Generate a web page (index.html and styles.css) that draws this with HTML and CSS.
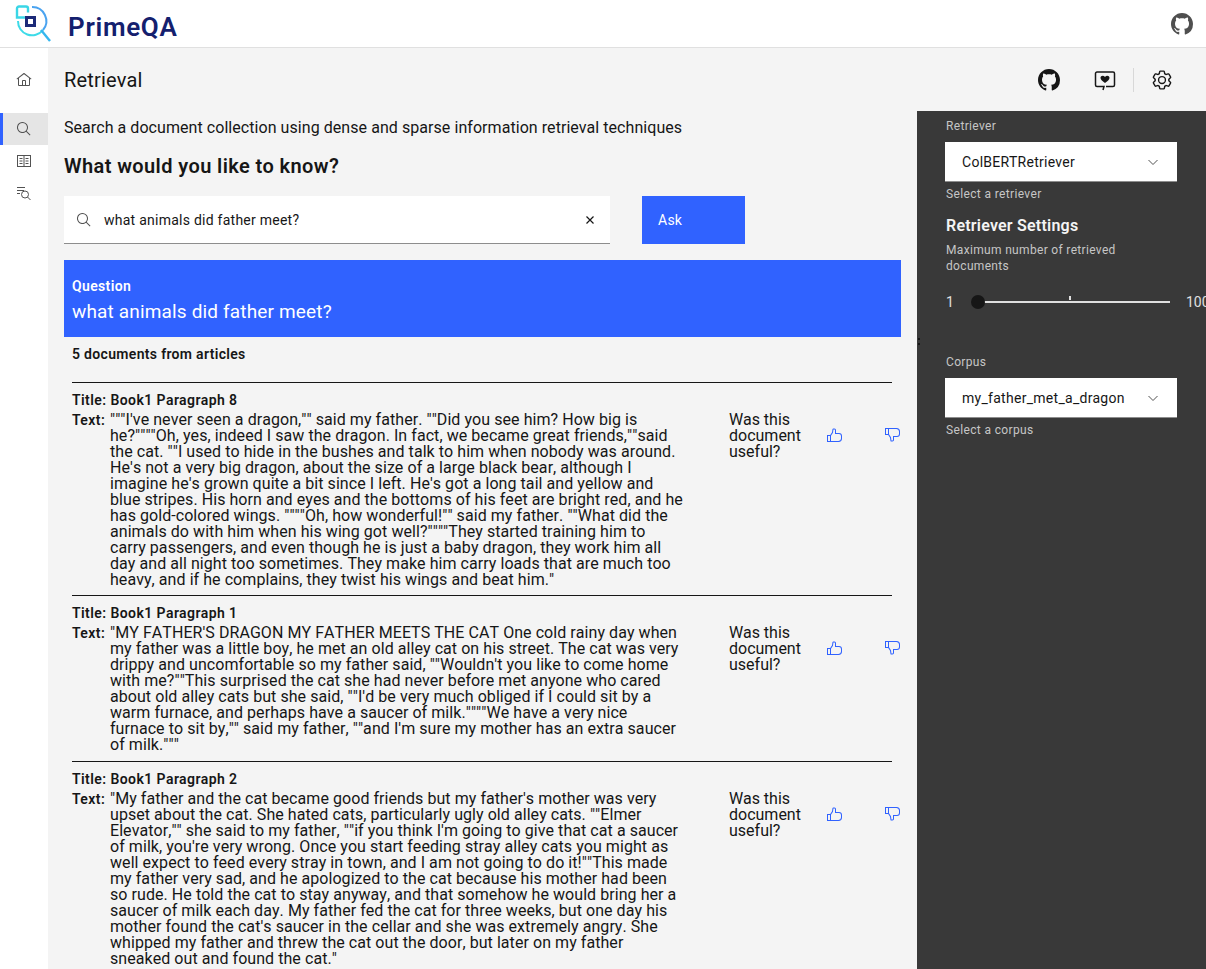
FILE: index.html
```html
<!DOCTYPE html>
<html lang="en">
<head>
  <meta charset="UTF-8">
  <meta name="viewport" content="width=device-width, initial-scale=1.0">
  <title>PrimeQA - Retrieval</title>
  <link rel="stylesheet" href="styles.css">
</head>
<body>
  <header class="topbar">
    <svg class="logo" width="40" height="44" viewBox="0 0 40 44" fill="none">
      <path d="M19 5a14 14 0 0 1 11 23" stroke="#4aa3f0" stroke-width="2"/>
      <path d="M5 19a14 14 0 0 0 25 9" stroke="#3ddbe8" stroke-width="2"/>
      <path d="M12 15.5H4V6.5a2 2 0 0 1 2-2h7a2 2 0 0 1 2 2v4" stroke="#3ad6e6" stroke-width="2.4"/>
      <rect x="13.5" y="15.5" width="8" height="8" stroke="#1c2a78" stroke-width="3"/>
      <path d="M28 28l9 11" stroke="#35b6ee" stroke-width="2.4"/>
    </svg>
    <span class="brand">PrimeQA</span>
    <svg class="top-github" width="22" height="22" viewBox="0 0 16 16" fill="#4f4f4f"><path d="M8 0C3.58 0 0 3.58 0 8c0 3.54 2.29 6.53 5.47 7.59.4.07.55-.17.55-.38 0-.19-.01-.82-.01-1.49-2.01.37-2.53-.49-2.69-.94-.09-.23-.48-.94-.82-1.13-.28-.15-.68-.52-.01-.53.63-.01 1.08.58 1.23.82.72 1.21 1.87.87 2.33.66.07-.52.28-.87.51-1.07-1.78-.2-3.64-.89-3.64-3.95 0-.87.31-1.59.82-2.15-.08-.2-.36-1.02.08-2.12 0 0 .67-.21 2.2.82.64-.18 1.32-.27 2-.27s1.36.09 2 .27c1.53-1.04 2.2-.82 2.2-.82.44 1.1.16 1.92.08 2.12.51.56.82 1.27.82 2.15 0 3.07-1.87 3.75-3.65 3.95.29.25.54.73.54 1.48 0 1.07-.01 1.93-.01 2.2 0 .21.15.46.55.38A8.013 8.013 0 0016 8c0-4.42-3.58-8-8-8z"/></svg>
  </header>

  <div class="shell">
    <nav class="sidenav">
      <a class="nav-item nav-home"><svg width="16" height="16" viewBox="0 0 32 32" fill="#525252"><path d="M16.6123,2.2138a1.01,1.01,0,0,0-1.2427,0L1,13.4194l1.2427,1.5717L4,13.6209V26a2.0041,2.0041,0,0,0,2,2H26a2.0037,2.0037,0,0,0,2-2V13.63L29.7573,15,31,13.4282ZM18,26H14V18h4Zm2,0V18a2.0023,2.0023,0,0,0-2-2H14a2.002,2.002,0,0,0-2,2v8H6V12.0615l10-7.79,10,7.8005V26Z"/></svg></a>
      <a class="nav-item nav-active"><svg width="16" height="16" viewBox="0 0 32 32" fill="#525252"><path d="M29,27.5859l-7.5521-7.5521a11.0177,11.0177,0,1,0-1.4141,1.4141L27.5859,29ZM4,13a9,9,0,1,1,9,9A9.01,9.01,0,0,1,4,13Z"/></svg></a>
      <a class="nav-item"><svg width="16" height="16" viewBox="0 0 16 16" fill="none" stroke="#525252"><rect x="1.5" y="2.5" width="13" height="11"/><path d="M8 2.5v11M3.5 5.5h3M3.5 8h3M3.5 10.5h3M9.5 5.5h3M9.5 8h3M9.5 10.5h3"/></svg></a>
      <a class="nav-item"><svg width="16" height="16" viewBox="0 0 16 16" fill="none" stroke="#525252"><path d="M1 2.5h8M1 5.5h7M1 8.5h3"/><circle cx="9" cy="9.5" r="3.5"/><path d="M11.5 12l3 3"/></svg></a>
    </nav>

    <div class="page">
      <div class="page-head">
        <h1 class="page-title">Retrieval</h1>
        <div class="page-actions">
          <svg class="act-github" width="22" height="22" viewBox="0 0 16 16" fill="#161616"><path d="M8 0C3.58 0 0 3.58 0 8c0 3.54 2.29 6.53 5.47 7.59.4.07.55-.17.55-.38 0-.19-.01-.82-.01-1.49-2.01.37-2.53-.49-2.69-.94-.09-.23-.48-.94-.82-1.13-.28-.15-.68-.52-.01-.53.63-.01 1.08.58 1.23.82.72 1.21 1.87.87 2.33.66.07-.52.28-.87.51-1.07-1.78-.2-3.64-.89-3.64-3.95 0-.87.31-1.59.82-2.15-.08-.2-.36-1.02.08-2.12 0 0 .67-.21 2.2.82.64-.18 1.32-.27 2-.27s1.36.09 2 .27c1.53-1.04 2.2-.82 2.2-.82.44 1.1.16 1.92.08 2.12.51.56.82 1.27.82 2.15 0 3.07-1.87 3.75-3.65 3.95.29.25.54.73.54 1.48 0 1.07-.01 1.93-.01 2.2 0 .21.15.46.55.38A8.013 8.013 0 0016 8c0-4.42-3.58-8-8-8z"/></svg>
          <svg class="act-feedback" width="22" height="22" viewBox="0 0 22 22" fill="none" stroke="#161616" stroke-width="1.5"><path d="M12 17.5h7a1.5 1.5 0 0 0 1.5-1.5V4.5A1.5 1.5 0 0 0 19 3H3a1.5 1.5 0 0 0-1.5 1.5V16A1.5 1.5 0 0 0 3 17.5h7L9 21"/><path d="M11 14C8 12 6.5 10.5 6.5 8.8 6.5 6.8 9.5 6 11 8c1.500-2 4.500-1.200 4.500.8 0 1.700-1.500 3.200-4.500 5.200z" fill="#161616" stroke="none"/></svg>
          <span class="act-divider"></span>
          <svg class="act-settings" width="22" height="22" viewBox="0 0 32 32" fill="#161616"><path d="M27,16.76c0-.25,0-.5,0-.76s0-.51,0-.77l1.92-1.68A2,2,0,0,0,29.3,11L26.94,7a2,2,0,0,0-1.73-1,2,2,0,0,0-.64.1l-2.43.82a11.35,11.35,0,0,0-1.31-.75l-.51-2.52a2,2,0,0,0-2-1.61H13.64a2,2,0,0,0-2,1.61l-.51,2.52a11.48,11.48,0,0,0-1.32.75L7.43,6.06A2,2,0,0,0,6.79,6,2,2,0,0,0,5.06,7L2.7,11a2,2,0,0,0,.41,2.51L5,15.24c0,.25,0,.5,0,.76s0,.51,0,.77L3.11,18.45A2,2,0,0,0,2.7,21L5.06,25a2,2,0,0,0,1.73,1,2,2,0,0,0,.64-.1l2.43-.82a11.35,11.35,0,0,0,1.31.75l.51,2.52a2,2,0,0,0,2,1.61h4.72a2,2,0,0,0,2-1.61l.51-2.52a11.48,11.48,0,0,0,1.32-.75l2.42.82a2,2,0,0,0,.64.1,2,2,0,0,0,1.73-1L29.3,21a2,2,0,0,0-.41-2.51ZM25.21,24l-3.43-1.16a8.86,8.86,0,0,1-2.71,1.57L18.36,28H13.64l-.71-3.55a9.36,9.36,0,0,1-2.7-1.57L6.79,24,4.43,20l2.72-2.4a8.9,8.9,0,0,1,0-3.13L4.43,12,6.79,8l3.43,1.16a8.86,8.86,0,0,1,2.71-1.57L13.64,4h4.72l.71,3.55a9.36,9.36,0,0,1,2.7,1.57L25.21,8,27.57,12l-2.72,2.4a8.9,8.9,0,0,1,0,3.13L27.57,20Z"/><path d="M16,22a6,6,0,1,1,6-6A5.94,5.94,0,0,1,16,22Zm0-10a3.91,3.91,0,0,0-4,4,3.91,3.91,0,0,0,4,4,3.91,3.91,0,0,0,4-4A3.91,3.91,0,0,0,16,12Z"/></svg>
        </div>
      </div>

      <div class="page-body">
        <main class="results">
          <p class="intro">Search a document collection using dense and sparse information retrieval techniques</p>
          <h2 class="ask-title">What would you like to know?</h2>
          <div class="ask-row">
            <div class="search-box">
              <svg width="16" height="16" viewBox="0 0 32 32" fill="#525252"><path d="M29,27.5859l-7.5521-7.5521a11.0177,11.0177,0,1,0-1.4141,1.4141L27.5859,29ZM4,13a9,9,0,1,1,9,9A9.01,9.01,0,0,1,4,13Z"/></svg>
              <span class="search-text">what animals did father meet?</span>
              <svg width="16" height="16" viewBox="0 0 16 16" fill="none" stroke="#161616" stroke-width="1.2"><path d="M4.500 4.500l7 7M11.500 4.500l-7 7"/></svg>
            </div>
            <button class="ask-btn">Ask</button>
          </div>

          <section class="question-card">
            <div class="question-label">Question</div>
            <div class="question-text">what animals did father meet?</div>
          </section>

          <div class="doc-count">5 documents from articles</div>

          <article class="doc">
            <div class="doc-title">Title: Book1 Paragraph 8</div>
            <div class="doc-row">
              <div class="doc-body">
                <span class="doc-label">Text:</span>
                <p class="doc-text">"""I've never seen a dragon,"" said my father. ""Did you see him? How big is<br>he?""""Oh, yes, indeed I saw the dragon. In fact, we became great friends,""said<br>the cat. ""I used to hide in the bushes and talk to him when nobody was around.<br>He's not a very big dragon, about the size of a large black bear, although I<br>imagine he's grown quite a bit since I left. He's got a long tail and yellow and<br>blue stripes. His horn and eyes and the bottoms of his feet are bright red, and he<br>has gold-colored wings. """"Oh, how wonderful!"" said my father. ""What did the<br>animals do with him when his wing got well?""""They started training him to<br>carry passengers, and even though he is just a baby dragon, they work him all<br>day and all night too sometimes. They make him carry loads that are much too<br>heavy, and if he complains, they twist his wings and beat him."</p>
              </div>
              <div class="doc-feedback">
                <span class="useful">Was this document useful?</span>
                <svg class="thumb thumb-up" width="16" height="16" viewBox="0 0 32 32"><path d="M26,12H20V6a3.0033,3.0033,0,0,0-3-3H14.8672a2.0094,2.0094,0,0,0-1.98,1.7173l-.8453,5.9165L8.4648,16H2V30H25a7.0078,7.0078,0,0,0,7-7V18A6.0066,6.0066,0,0,0,26,12ZM8,28H4V18H8Zm22-5a5.0059,5.0059,0,0,1-5,5H10V17.3027l3.9578-5.9365L14.8672,5H17a1.0009,1.0009,0,0,1,1,1v8h8a4.0045,4.0045,0,0,1,4,4Z"/></svg>
                <svg class="thumb thumb-down" width="16" height="16" viewBox="0 0 32 32"><path d="M26,12H20V6a3.0033,3.0033,0,0,0-3-3H14.8672a2.0094,2.0094,0,0,0-1.98,1.7173l-.8453,5.9165L8.4648,16H2V30H25a7.0078,7.0078,0,0,0,7-7V18A6.0066,6.0066,0,0,0,26,12ZM8,28H4V18H8Zm22-5a5.0059,5.0059,0,0,1-5,5H10V17.3027l3.9578-5.9365L14.8672,5H17a1.0009,1.0009,0,0,1,1,1v8h8a4.0045,4.0045,0,0,1,4,4Z"/></svg>
              </div>
            </div>
          </article>

          <article class="doc">
            <div class="doc-title">Title: Book1 Paragraph 1</div>
            <div class="doc-row">
              <div class="doc-body">
                <span class="doc-label">Text:</span>
                <p class="doc-text">"MY FATHER'S DRAGON MY FATHER MEETS THE CAT One cold rainy day when<br>my father was a little boy, he met an old alley cat on his street. The cat was very<br>drippy and uncomfortable so my father said, ""Wouldn't you like to come home<br>with me?""This surprised the cat she had never before met anyone who cared<br>about old alley cats but she said, ""I'd be very much obliged if I could sit by a<br>warm furnace, and perhaps have a saucer of milk.""""We have a very nice<br>furnace to sit by,"" said my father, ""and I'm sure my mother has an extra saucer<br>of milk."""</p>
              </div>
              <div class="doc-feedback">
                <span class="useful">Was this document useful?</span>
                <svg class="thumb thumb-up" width="16" height="16" viewBox="0 0 32 32"><path d="M26,12H20V6a3.0033,3.0033,0,0,0-3-3H14.8672a2.0094,2.0094,0,0,0-1.98,1.7173l-.8453,5.9165L8.4648,16H2V30H25a7.0078,7.0078,0,0,0,7-7V18A6.0066,6.0066,0,0,0,26,12ZM8,28H4V18H8Zm22-5a5.0059,5.0059,0,0,1-5,5H10V17.3027l3.9578-5.9365L14.8672,5H17a1.0009,1.0009,0,0,1,1,1v8h8a4.0045,4.0045,0,0,1,4,4Z"/></svg>
                <svg class="thumb thumb-down" width="16" height="16" viewBox="0 0 32 32"><path d="M26,12H20V6a3.0033,3.0033,0,0,0-3-3H14.8672a2.0094,2.0094,0,0,0-1.98,1.7173l-.8453,5.9165L8.4648,16H2V30H25a7.0078,7.0078,0,0,0,7-7V18A6.0066,6.0066,0,0,0,26,12ZM8,28H4V18H8Zm22-5a5.0059,5.0059,0,0,1-5,5H10V17.3027l3.9578-5.9365L14.8672,5H17a1.0009,1.0009,0,0,1,1,1v8h8a4.0045,4.0045,0,0,1,4,4Z"/></svg>
              </div>
            </div>
          </article>

          <article class="doc">
            <div class="doc-title">Title: Book1 Paragraph 2</div>
            <div class="doc-row">
              <div class="doc-body">
                <span class="doc-label">Text:</span>
                <p class="doc-text">"My father and the cat became good friends but my father's mother was very<br>upset about the cat. She hated cats, particularly ugly old alley cats. ""Elmer<br>Elevator,"" she said to my father, ""if you think I'm going to give that cat a saucer<br>of milk, you're very wrong. Once you start feeding stray alley cats you might as<br>well expect to feed every stray in town, and I am not going to do it!""This made<br>my father very sad, and he apologized to the cat because his mother had been<br>so rude. He told the cat to stay anyway, and that somehow he would bring her a<br>saucer of milk each day. My father fed the cat for three weeks, but one day his<br>mother found the cat's saucer in the cellar and she was extremely angry. She<br>whipped my father and threw the cat out the door, but later on my father<br>sneaked out and found the cat."</p>
              </div>
              <div class="doc-feedback">
                <span class="useful">Was this document useful?</span>
                <svg class="thumb thumb-up" width="16" height="16" viewBox="0 0 32 32"><path d="M26,12H20V6a3.0033,3.0033,0,0,0-3-3H14.8672a2.0094,2.0094,0,0,0-1.98,1.7173l-.8453,5.9165L8.4648,16H2V30H25a7.0078,7.0078,0,0,0,7-7V18A6.0066,6.0066,0,0,0,26,12ZM8,28H4V18H8Zm22-5a5.0059,5.0059,0,0,1-5,5H10V17.3027l3.9578-5.9365L14.8672,5H17a1.0009,1.0009,0,0,1,1,1v8h8a4.0045,4.0045,0,0,1,4,4Z"/></svg>
                <svg class="thumb thumb-down" width="16" height="16" viewBox="0 0 32 32"><path d="M26,12H20V6a3.0033,3.0033,0,0,0-3-3H14.8672a2.0094,2.0094,0,0,0-1.98,1.7173l-.8453,5.9165L8.4648,16H2V30H25a7.0078,7.0078,0,0,0,7-7V18A6.0066,6.0066,0,0,0,26,12ZM8,28H4V18H8Zm22-5a5.0059,5.0059,0,0,1-5,5H10V17.3027l3.9578-5.9365L14.8672,5H17a1.0009,1.0009,0,0,1,1,1v8h8a4.0045,4.0045,0,0,1,4,4Z"/></svg>
              </div>
            </div>
          </article>
        </main>

        <aside class="settings">
          <span class="splitter"></span>
          <div class="field-label">Retriever</div>
          <div class="select-box"><span>ColBERTRetriever</span><svg width="16" height="16" viewBox="0 0 16 16" fill="none" stroke="#525252"><path d="M3.500 6l4.500 4.500L12.500 6"/></svg></div>
          <div class="field-help">Select a retriever</div>
          <h3 class="settings-title">Retriever Settings</h3>
          <div class="field-label slider-label">Maximum number of retrieved documents</div>
          <div class="slider-row">
            <span class="slider-min">1</span>
            <div class="slider-track">
              <span class="slider-thumb"></span>
              <span class="slider-tick"></span>
            </div>
            <span class="slider-max">100</span>
          </div>
          <div class="field-label corpus-label">Corpus</div>
          <div class="select-box"><span>my_father_met_a_dragon</span><svg width="16" height="16" viewBox="0 0 16 16" fill="none" stroke="#525252"><path d="M3.500 6l4.500 4.500L12.500 6"/></svg></div>
          <div class="field-help">Select a corpus</div>
        </aside>
      </div>
    </div>
  </div>
</body>
</html>
```

FILE: styles.css
```css
/* General Styles */
* {
  box-sizing: border-box;
}

html,
body {
  height: 100%;
  margin: 0;
  overflow: hidden;
}

body {
  font-family: Roboto, "Noto Sans", sans-serif;
  color: #161616;
  background-color: #f4f4f4;
}

h1, h2, h3, p {
  margin: 0;
  font-weight: normal;
}

/* Top bar */
.topbar {
  display: flex;
  align-items: center;
  height: 48px;
  background-color: white;
  border-bottom: 1px solid #e0e0e0;
  padding-left: 13px;
}

.logo {
  flex: none;
}

.brand {
  margin: 6px 0 0 15px;
  font-size: 26px;
  font-weight: 600;
  letter-spacing: 0.7px;
  color: #14206e;
}

.top-github {
  margin-left: auto;
  margin-right: 13px;
}

/* Side nav */
.shell {
  display: flex;
  height: 921px;
}

.sidenav {
  flex: none;
  width: 48px;
  background-color: white;
  padding-top: 16px;
}

.nav-item {
  display: flex;
  justify-content: center;
  align-items: center;
  height: 32px;
}

.nav-home {
  margin-bottom: 17px;
}

.nav-active {
  background-color: #e5e5e5;
  border-left: 3px solid #3062ff;
  padding-right: 3px;
}

/* Page */
.page {
  flex: 1;
  min-width: 0;
  display: flex;
  flex-direction: column;
}

.page-head {
  flex: none;
  display: flex;
  justify-content: space-between;
  align-items: center;
  height: 63px;
  padding: 0 33px 0 16px;
}

.page-title {
  font-size: 20px;
  letter-spacing: 0.2px;
}

.page-actions {
  display: flex;
  align-items: center;
}

.act-feedback {
  margin-left: 34px;
}

.act-divider {
  width: 1px;
  height: 24px;
  margin: 0 17px;
  background-color: #d8d8d8;
}

.page-body {
  flex: 1;
  display: flex;
  min-height: 0;
}

.results {
  width: 869px;
  padding: 7px 16px 0;
}

.intro {
  font-size: 16px;
  line-height: 20px;
  letter-spacing: 0.06px;
}

.ask-title {
  margin-top: 16px;
  font-size: 20px;
  line-height: 24px;
  font-weight: 600;
  letter-spacing: 0.4px;
}

.ask-row {
  display: flex;
  margin-top: 18px;
}

.search-box {
  display: flex;
  align-items: center;
  width: 546px;
  height: 48px;
  padding: 0 12px;
  background-color: white;
  border-bottom: 1px solid #8d8d8d;
}

.search-text {
  flex: 1;
  margin-left: 12px;
  font-size: 14px;
  letter-spacing: 0.25px;
}

.ask-btn {
  width: 103px;
  height: 48px;
  margin-left: 32px;
  padding: 0 16px;
  border: none;
  text-align: left;
  font-family: inherit;
  font-size: 14px;
  letter-spacing: 0.25px;
  color: white;
  background-color: #3062ff;
}

.question-card {
  height: 77px;
  margin-top: 16px;
  padding: 17px 8px 0;
  color: white;
  background-color: #3062ff;
}

.question-label {
  font-size: 14px;
  line-height: 18px;
  font-weight: 600;
  letter-spacing: 0.35px;
}

.question-text {
  margin-top: 4px;
  font-size: 19px;
  line-height: 26px;
  letter-spacing: 0.16px;
}

.doc-count {
  margin: 8px 0 19px 8px;
  font-size: 14px;
  line-height: 18px;
  font-weight: 600;
  letter-spacing: 0.32px;
}

/* Documents */
.doc {
  width: 820px;
  margin: 0 0 0 8px;
  border-top: 1px solid #161616;
  padding: 8px 0 7px;
}

.doc + .doc + .doc {
  margin-top: 1px;
}

.doc-title {
  font-size: 14px;
  line-height: 18px;
  font-weight: 600;
  letter-spacing: 0.43px;
}

.doc-row {
  display: flex;
  margin-top: 3px;
}

.doc-body {
  flex: none;
  display: flex;
  width: 657px;
}

.doc-label {
  flex: none;
  width: 38px;
  font-size: 14px;
  line-height: 16px;
  font-weight: 600;
  letter-spacing: 0.4px;
}

.doc-text {
  font-size: 16px;
  line-height: 16px;
  letter-spacing: 0.06px;
  font-kerning: none;
  white-space: nowrap;
}

.doc-feedback {
  flex: none;
  display: flex;
  width: 171px;
}

.useful {
  width: 90px;
  font-size: 16px;
  line-height: 16px;
}

.thumb {
  flex: none;
  fill: #3062ff;
  margin: 15px 0 0 7px;
}

.thumb-down {
  margin-left: 42px;
  transform: scaleY(-1);
}

/* Settings panel */
.settings {
  position: relative;
  flex: 1;
  min-width: 0;
  overflow: hidden;
  padding: 7px 0 0 29px;
  color: #c6c6c6;
  background-color: #393939;
}

.splitter {
  position: absolute;
  left: 1px;
  top: 227px;
  width: 2px;
  height: 7px;
  border-top: 2px dotted #161616;
  border-bottom: 2px dotted #161616;
}

.field-label {
  font-size: 12px;
  line-height: 16px;
  letter-spacing: 0.33px;
}

.select-box {
  display: flex;
  justify-content: space-between;
  align-items: center;
  width: 232px;
  height: 40px;
  margin: 8px 0 0 -1px;
  padding: 0 16px 0 17px;
  font-size: 14px;
  letter-spacing: 0.28px;
  color: #161616;
  background-color: white;
  border-bottom: 1px solid #8d8d8d;
}

.field-help {
  margin-top: 4px;
  font-size: 12px;
  line-height: 16px;
  letter-spacing: 0.36px;
}

.settings-title {
  margin-top: 13px;
  font-size: 16px;
  line-height: 22px;
  font-weight: 600;
  letter-spacing: 0.22px;
  color: #f4f4f4;
}

.slider-label {
  margin-top: 5px;
  width: 200px;
}

.slider-row {
  display: flex;
  align-items: center;
  width: 300px;
  height: 16px;
  margin-top: 20px;
  font-size: 14px;
  color: #e0e0e0;
}

.slider-min {
  width: 32px;
}

.slider-track {
  position: relative;
  flex: none;
  width: 192px;
  height: 2px;
  background-color: #e0e0e0;
}

.slider-thumb {
  position: absolute;
  left: -7px;
  top: -6px;
  width: 14px;
  height: 14px;
  border-radius: 50%;
  background-color: #161616;
}

.slider-tick {
  position: absolute;
  left: 91px;
  top: -5px;
  width: 2px;
  height: 4px;
  background-color: #e0e0e0;
}

.slider-max {
  margin-left: 16px;
}

.corpus-label {
  margin-top: 44px;
}
```
